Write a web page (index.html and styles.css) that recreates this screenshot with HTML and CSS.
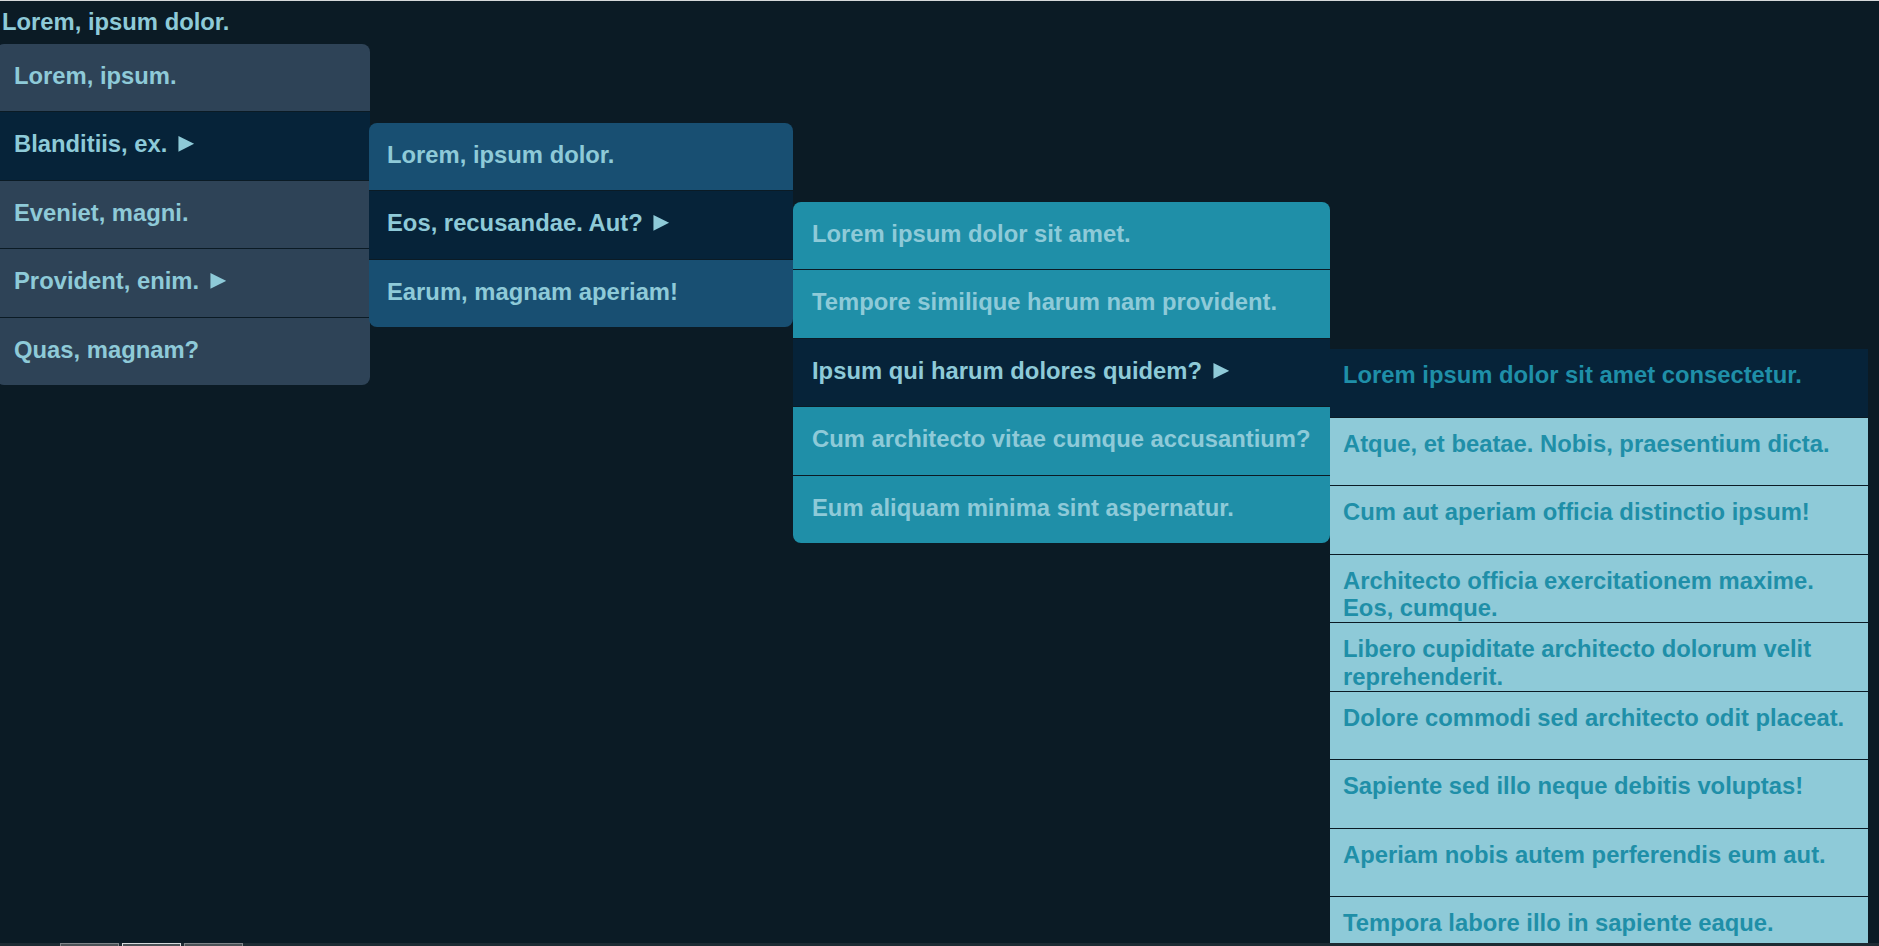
FILE: index.html
```html
<!DOCTYPE html>
<html lang="en">
<head>
<meta charset="utf-8">
<title>Menu</title>
<link rel="stylesheet" href="styles.css">
</head>
<body>
<header class="title">Lorem, ipsum dolor.</header>
<nav class="menu-root">
  <ul class="menu level-1">
    <li class="item">Lorem, ipsum.</li>
    <li class="item active has-sub">Blanditiis, ex. <svg class="arrow" viewBox="0 0 16 16"><path d="M0 0 L16 8 L0 16 Z"/></svg>
      <ul class="menu submenu level-2">
        <li class="item">Lorem, ipsum dolor.</li>
        <li class="item active has-sub">Eos, recusandae. Aut? <svg class="arrow" viewBox="0 0 16 16"><path d="M0 0 L16 8 L0 16 Z"/></svg>
          <ul class="menu submenu level-3">
            <li class="item">Lorem ipsum dolor sit amet.</li>
            <li class="item">Tempore similique harum nam provident.</li>
            <li class="item active has-sub">Ipsum qui harum dolores quidem? <svg class="arrow" viewBox="0 0 16 16"><path d="M0 0 L16 8 L0 16 Z"/></svg>
              <ul class="menu submenu level-4">
                <li class="item active">Lorem ipsum dolor sit amet consectetur.</li>
                <li class="item">Atque, et beatae. Nobis, praesentium dicta.</li>
                <li class="item">Cum aut aperiam officia distinctio ipsum!</li>
                <li class="item">Architecto officia exercitationem maxime. Eos, cumque.</li>
                <li class="item">Libero cupiditate architecto dolorum velit reprehenderit.</li>
                <li class="item">Dolore commodi sed architecto odit placeat.</li>
                <li class="item">Sapiente sed illo neque debitis voluptas!</li>
                <li class="item">Aperiam nobis autem perferendis eum aut.</li>
                <li class="item">Tempora labore illo in sapiente eaque.</li>
              </ul>
            </li>
            <li class="item">Cum architecto vitae cumque accusantium?</li>
            <li class="item">Eum aliquam minima sint aspernatur.</li>
          </ul>
        </li>
        <li class="item">Earum, magnam aperiam!</li>
      </ul>
    </li>
    <li class="item">Eveniet, magni.</li>
    <li class="item">Provident, enim. <svg class="arrow" viewBox="0 0 16 16"><path d="M0 0 L16 8 L0 16 Z"/></svg></li>
    <li class="item">Quas, magnam?</li>
  </ul>
</nav>
<div class="dock">
  <span class="dock-btn"></span>
  <span class="dock-btn dock-btn-current"></span>
  <span class="dock-btn"></span>
</div>
</body>
</html>
```

FILE: styles.css
```css
* {
  box-sizing: border-box;
}

html {
  overflow: hidden;
  background: #0b1b25;
}

body {
  margin: 0;
  min-height: 100vh;
  border-top: 1px solid #d6d9da;
  background: #0b1b25;
  font-family: "Liberation Sans", Arial, sans-serif;
  font-weight: bold;
  font-size: 23.8px;
  color: #8ecad8;
}

.title {
  padding: 7px 0 0 2px;
  line-height: 27.5px;
  margin-bottom: 8px;
}

.menu-root {
  margin-left: -4px;
  width: 374px;
}

.menu {
  list-style: none;
  margin: 0;
  padding: 0;
}

.item {
  padding: 18px 18px 22px;
  line-height: 27.5px;
  border-bottom: 1px solid #0b1b25;
  white-space: nowrap;
}

.level-3 > .item {
  padding-left: 19px;
}

.item:last-child {
  border-bottom: 0;
}

.level-1 > .item {
  background: #2e4357;
}

.level-2 > .item {
  background: #184f72;
}

.level-3 > .item {
  background: #1f8fa8;
}

.level-4 > .item {
  background: #8ecad8;
  color: #1f8fa8;
  height: 68.5px;
  padding: 12px 12px 0 13px;
  white-space: normal;
}

.level-1 > .item.active,
.level-2 > .item.active,
.level-3 > .item.active,
.level-4 > .item.active {
  background: #062339;
}

.level-1 > .item:first-child,
.level-2 > .item:first-child,
.level-3 > .item:first-child {
  border-radius: 8px 8px 0 0;
}

.level-1 > .item:last-child,
.level-2 > .item:last-child,
.level-3 > .item:last-child {
  border-radius: 0 0 8px 8px;
}

.has-sub {
  position: relative;
}

.submenu {
  position: absolute;
  top: 10.5px;
  z-index: 1;
}

.level-2 {
  left: calc(100% - 1px);
  width: 424px;
}

.level-3 {
  left: 100%;
  width: 537px;
}

.level-4 {
  left: 100%;
  width: 538px;
}

.arrow {
  width: 16.5px;
  height: 15.7px;
  margin-left: 4px;
  fill: currentColor;
}

.dock {
  position: fixed;
  left: 0;
  right: 0;
  bottom: -27px;
  height: 30px;
  display: flex;
  gap: 3px;
  padding-left: 60px;
  background: #1d2b33;
  z-index: 5;
}

.dock-btn {
  width: 59px;
  height: 30px;
  border: 1px solid #80868a;
  background: #4b5257;
}

.dock-btn-current {
  border-color: #d5d9db;
}
```
